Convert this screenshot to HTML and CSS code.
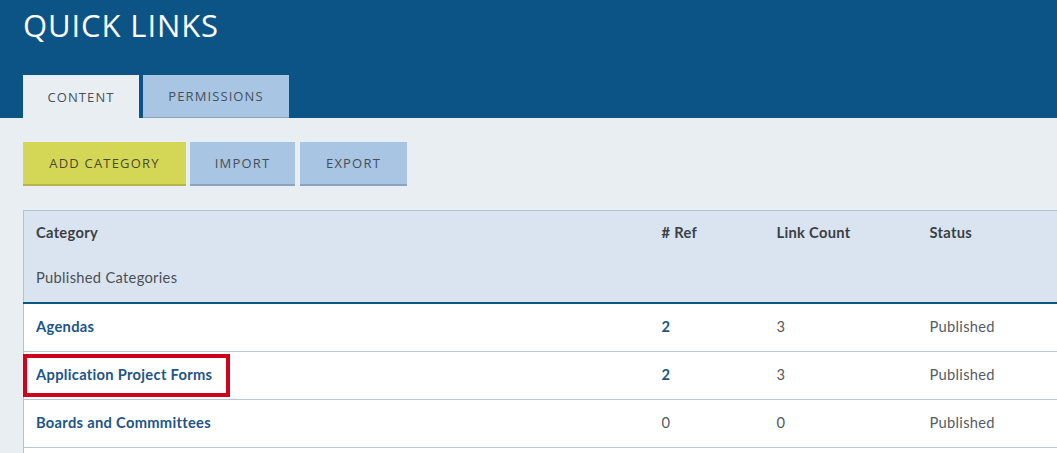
FILE: index.html
```html
<!DOCTYPE html>
<html>
<head>
<meta charset="utf-8">
<link rel="stylesheet" href="styles.css">
</head>
<body>
<header class="masthead">
  <h1 class="title">QUICK LINKS</h1>
  <nav class="tabs">
    <a class="tab tab-active">CONTENT</a>
    <a class="tab">PERMISSIONS</a>
  </nav>
</header>
<main class="content">
  <div class="toolbar">
    <button class="btn btn-add">ADD CATEGORY</button>
    <button class="btn">IMPORT</button>
    <button class="btn">EXPORT</button>
  </div>
  <table class="grid">
    <colgroup>
      <col class="c-cat"><col class="c-ref"><col class="c-link"><col class="c-status">
    </colgroup>
    <thead>
      <tr class="head-row">
        <th>Category</th><th># Ref</th><th>Link Count</th><th>Status</th>
      </tr>
      <tr class="sub-row">
        <th class="sub">Published Categories</th><th></th><th></th><th></th>
      </tr>
    </thead>
    <tbody>
      <tr>
        <td><a class="name">Agendas</a></td>
        <td><a class="ref">2</a></td><td>3</td><td>Published</td>
      </tr>
      <tr>
        <td class="highlight-cell"><a class="name">Application Project Forms</a><span class="highlight"></span></td>
        <td><a class="ref">2</a></td><td>3</td><td>Published</td>
      </tr>
      <tr>
        <td><a class="name">Boards and Commmittees</a></td>
        <td>0</td><td>0</td><td>Published</td>
      </tr>
      <tr class="empty-row">
        <td></td><td></td><td></td><td></td>
      </tr>
    </tbody>
  </table>
</main>
</body>
</html>
```
FILE: styles.css
```css
html, body {
  margin: 0;
  padding: 0;
  overflow: hidden;
  width: 1057px;
  height: 453px;
}
body {
  background: #e9eef3;
  font-family: "Lato", "Liberation Sans", sans-serif;
}
.masthead {
  background: #0c5486;
  height: 118px;
  padding: 0 23px;
  box-sizing: border-box;
  display: flex;
  flex-direction: column;
}
.title {
  margin: 0;
  padding-top: 7px;
  font-family: "Open Sans", "DejaVu Sans", sans-serif;
  font-weight: 400;
  font-size: 31px;
  line-height: 36px;
  letter-spacing: 0.9px;
  color: #ffffff;
}
.tabs {
  display: flex;
  gap: 4px;
  margin-top: auto;
}
.tab {
  display: flex;
  align-items: center;
  justify-content: center;
  height: 43px;
  box-sizing: border-box;
  font-family: "Open Sans", sans-serif;
  font-size: 13px;
  letter-spacing: 1.1px;
  color: #45505c;
  background: #a8c5e3;
  border-bottom: 1px solid #8aa3bf;
  width: 146px;
}
.tab-active {
  background: #e9eef3;
  border-bottom: none;
  width: 116px;
}
.content {
  padding: 24px 0 0 23px;
}
.toolbar {
  display: flex;
  gap: 4px;
  height: 44px;
}
.btn {
  font-family: "Open Sans", sans-serif;
  font-size: 13px;
  letter-spacing: 1.2px;
  color: #464e55;
  background: #a8c5e3;
  border: none;
  border-bottom: 2px solid #8aa3bf;
  height: 44px;
  width: 105px;
  padding: 0;
  margin: 0;
}
.btn:nth-child(3) { width: 107px; margin-left: 1px; }
.btn-add {
  background: #d4d656;
  border-bottom-color: #b4b54a;
  color: #4c4a2e;
  width: 163px;
}
.grid {
  margin-top: 24px;
  border-collapse: collapse;
  table-layout: fixed;
  width: 1200px;
  background: #ffffff;
  border-left: 1px solid #b3c2d2;
  border-top: 1px solid #b3c2d2;
  font-size: 14.7px;
  letter-spacing: 0.3px;
}
.c-cat { width: 626px; }
.c-ref { width: 115px; }
.c-link { width: 153px; }
.c-status { width: 306px; }
.grid th {
  text-align: left;
  font-weight: 700;
  color: #3b3f44;
  background: #dae4f0;
  padding: 0 0 0 12px;
}
.head-row th {
  height: 42px;
  padding-bottom: 2px;
  vertical-align: middle;
}
.sub-row th {
  height: 44px;
  padding-bottom: 3px;
  vertical-align: middle;
  border-bottom: 2px solid #0c5486;
}
.grid th.sub {
  font-weight: 400;
  color: #4a4f55;
}
.grid td {
  height: 44px;
  padding: 0 0 3px 12px;
  border-bottom: 1px solid #b9c6d3;
  color: #555b61;
  vertical-align: middle;
}
.name, .ref {
  color: #1d5586;
  font-weight: 700;
}
.highlight-cell {
  position: relative;
}
.highlight {
  position: absolute;
  left: -1px;
  top: 2px;
  width: 207px;
  height: 43px;
  box-sizing: border-box;
  border: 4px solid #d0021b;
}
```
